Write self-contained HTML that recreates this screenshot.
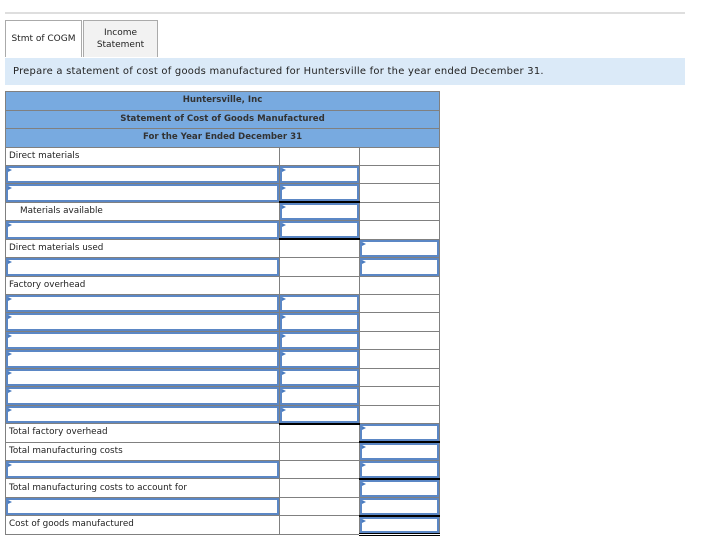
<!DOCTYPE html>
<html><head><meta charset="utf-8"><style>
body{margin:0;width:709px;height:551px;background:#fff;font-family:"DejaVu Sans","Liberation Sans",sans-serif;position:relative;overflow:hidden}
.topline{position:absolute;left:5px;top:12px;width:680px;height:2px;background:#dedede}
.tab{position:absolute;top:20px;height:36px;border:1px solid #aaa;border-bottom:none;font-size:9px;color:#222;display:flex;align-items:center;justify-content:center;text-align:center;line-height:12px}
.band{position:absolute;left:5px;top:58px;width:680px;height:27px;background:#dbeaf8;font-size:9.95px;color:#222;line-height:28px;padding-left:8px;box-sizing:border-box;letter-spacing:0.25px}
table{position:absolute;left:5px;top:91px;border-collapse:collapse;table-layout:fixed;width:434px}
td{border:1px solid #808080;padding:0;height:18.45px;position:relative;font-size:8.8px;color:#222;line-height:17px;box-sizing:border-box;overflow:hidden;white-space:nowrap}
td.h{background:#78aae0;font-weight:bold;text-align:center;color:#333;height:18.5px;font-size:8.6px}
.l{padding-left:3px}
.i::after{content:"";position:absolute;left:0;top:0;right:0;bottom:0;border:2px solid #5b87c5}
.i::before{content:"";position:absolute;left:2px;top:2px;border-left:4px solid #4a7cc0;border-top:2.5px solid transparent;border-bottom:2.5px solid transparent;z-index:2}
.bt{border-top:2px solid #000}
.bb{border-bottom:3px double #000}
</style></head><body>
<div class="topline"></div>
<div class="tab" style="left:5px;width:75px;background:#fff">Stmt of COGM</div>
<div class="tab" style="left:83px;width:73px;background:#f2f2f2">Income<br>Statement</div>
<div class="band">Prepare a statement of cost of goods manufactured for Huntersville for the year ended December 31.</div>
<table>
<colgroup><col style="width:274px"><col style="width:80px"><col style="width:80px"></colgroup>
<tr><td class="h" colspan="3">Huntersville, Inc</td></tr>
<tr><td class="h" colspan="3">Statement of Cost of Goods Manufactured</td></tr>
<tr><td class="h" colspan="3">For the Year Ended December 31</td></tr>
<tr><td class="l">Direct materials</td><td></td><td></td></tr>
<tr><td class="i"></td><td class="i"></td><td></td></tr>
<tr><td class="i"></td><td class="i"></td><td></td></tr>
<tr><td class="l" style="padding-left:14px">Materials available</td><td class="i bt"></td><td></td></tr>
<tr><td class="i"></td><td class="i"></td><td></td></tr>
<tr><td class="l">Direct materials used</td><td class="bt"></td><td class="i"></td></tr>
<tr><td class="i"></td><td></td><td class="i"></td></tr>
<tr><td class="l">Factory overhead</td><td></td><td></td></tr>
<tr><td class="i"></td><td class="i"></td><td></td></tr>
<tr><td class="i"></td><td class="i"></td><td></td></tr>
<tr><td class="i"></td><td class="i"></td><td></td></tr>
<tr><td class="i"></td><td class="i"></td><td></td></tr>
<tr><td class="i"></td><td class="i"></td><td></td></tr>
<tr><td class="i"></td><td class="i"></td><td></td></tr>
<tr><td class="i"></td><td class="i"></td><td></td></tr>
<tr><td class="l">Total factory overhead</td><td class="bt"></td><td class="i"></td></tr>
<tr><td class="l">Total manufacturing costs</td><td></td><td class="i bt"></td></tr>
<tr><td class="i"></td><td></td><td class="i"></td></tr>
<tr><td class="l">Total manufacturing costs to account for</td><td></td><td class="i bt"></td></tr>
<tr><td class="i"></td><td></td><td class="i"></td></tr>
<tr><td class="l">Cost of goods manufactured</td><td></td><td class="i bt bb"></td></tr>
</table>
</body></html>
